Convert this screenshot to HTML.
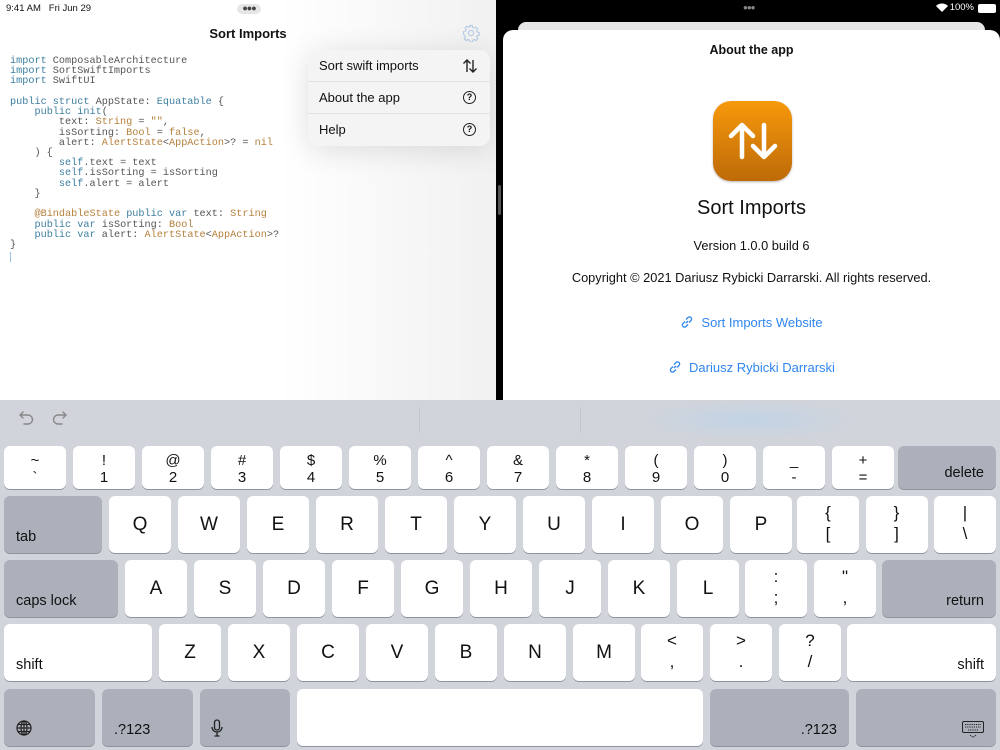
<!DOCTYPE html>
<html><head><meta charset="utf-8"><style>
*{margin:0;padding:0;box-sizing:border-box}
body{width:1000px;height:750px;overflow:hidden;position:relative;font-family:"Liberation Sans",sans-serif;background:#000}
.left{position:absolute;left:0;top:0;width:496px;height:400px;background:linear-gradient(90deg,#fff 0,#fff 280px,#f1f1f1 496px)}
.abs{position:absolute}
.code{position:absolute;left:10px;top:57px;font-family:"Liberation Mono",monospace;font-size:10.2px;line-height:10.22px;color:#555;white-space:pre}
.k{color:#3d7fa1}.t{color:#b5803c}
.menu{position:absolute;left:308px;top:50px;width:182px;height:96px;background:#f4f4f4;border-radius:10px;box-shadow:0 4px 30px rgba(0,0,0,.12);font-size:13px;color:#111}
.menu div{height:32px;line-height:32px;padding-left:11px;border-bottom:1px solid #e2e2e2;position:relative}
.menu div:last-child{border:none}
.q{position:absolute;right:14px;top:9px;width:13px;height:13px;border:1.2px solid #222;border-radius:50%;font-size:9px;line-height:11px;text-align:center;font-weight:bold}
.right{position:absolute;left:503px;top:30px;width:497px;height:370px;background:#fff;border-radius:10px 10px 0 0}
.kb{position:absolute;left:0;top:400px;width:1000px;height:350px;background:#d1d4db}
.key{position:absolute;background:#fff;border-radius:6px;box-shadow:0 1px 0 #8e939c;text-align:center;color:#111}
.sp{background:#abb0ba}
.l{font-size:19px;line-height:57px}
.d{font-size:15px;line-height:17px;padding-top:6px}
.lab{position:absolute;font-size:14.5px;bottom:8px}
.lnk{position:absolute;left:0;width:497px;text-align:center;font-size:13px;color:#2f86f0}
.lnk svg{vertical-align:-2px;margin-right:7px}
</style></head><body>
<div class="left">
<div class="abs" style="left:6px;top:3px;font-size:9.5px;color:#111">9:41 AM&nbsp;&nbsp;&nbsp;Fri Jun 29</div>
<div class="abs" style="left:237px;top:4px;width:24px;height:10px;border-radius:5px;background:#e6e6e6;font-size:9px;line-height:9px;text-align:center;color:#444;letter-spacing:-1px">●●●</div>
<div class="abs" style="left:0;width:496px;top:26px;text-align:center;font-size:13px;font-weight:bold;color:#111">Sort Imports</div>
<svg class="abs" style="left:462px;top:24px" width="18" height="18" viewBox="0 0 24 24" fill="none" stroke="#b9cde6" stroke-width="1.6"><circle cx="12" cy="12" r="3.5"/><path d="M10.3 2h3.4l.6 2.6 2 .9 2.3-1.4 2.4 2.4-1.4 2.3.9 2 2.6.6v3.4l-2.6.6-.9 2 1.4 2.3-2.4 2.4-2.3-1.4-2 .9-.6 2.6h-3.4l-.6-2.6-2-.9-2.3 1.4-2.4-2.4 1.4-2.3-.9-2L2 13.7v-3.4l2.6-.6.9-2-1.4-2.3 2.4-2.4 2.3 1.4 2-.9z"/></svg>
<div class="code"><span class="k">import</span> ComposableArchitecture
<span class="k">import</span> SortSwiftImports
<span class="k">import</span> SwiftUI

<span class="k">public struct</span> AppState: <span class="k">Equatable</span> {
    <span class="k">public init</span>(
        text: <span class="t">String</span> = <span class="t">""</span>,
        isSorting: <span class="t">Bool</span> = <span class="t">false</span>,
        alert: <span class="t">AlertState</span>&lt;<span class="t">AppAction</span>&gt;? = <span class="t">nil</span>
    ) {
        <span class="k">self</span>.text = text
        <span class="k">self</span>.isSorting = isSorting
        <span class="k">self</span>.alert = alert
    }

    <span class="t">@BindableState</span> <span class="k">public var</span> text: <span class="t">String</span>
    <span class="k">public var</span> isSorting: <span class="t">Bool</span>
    <span class="k">public var</span> alert: <span class="t">AlertState</span>&lt;<span class="t">AppAction</span>&gt;?
}</div>
<div class="abs" style="left:10px;top:252px;width:1px;height:10px;background:#9ec3e6"></div>
<div class="menu">
<div>Sort swift imports<svg class="abs" style="right:12px;top:8px" width="16" height="16" viewBox="0 0 16 16" fill="none" stroke="#222" stroke-width="1.4"><path d="M5 14V2M1.5 5.5 5 2l3.5 3.5M11 2v12M7.5 10.5 11 14l3.5-3.5"/></svg></div>
<div>About the app<span class="q">?</span></div>
<div>Help<span class="q">?</span></div>
</div>
</div>
<div class="abs" style="left:498px;top:185px;width:3px;height:30px;background:#555;border-radius:2px"></div>
<div class="abs" style="left:743px;top:3px;color:#888;font-size:8px;letter-spacing:-1px">●●●</div>
<div class="abs" style="right:26px;top:2px;color:#fff;font-size:9.5px">100%</div>
<div class="abs" style="right:4px;top:4px;width:18px;height:9px;border-radius:2px;background:#fff"></div>
<svg class="abs" style="left:936px;top:3px" width="12" height="9" viewBox="0 0 12 9"><path d="M6 9 0 3a8.5 8.5 0 0 1 12 0z" fill="#fff"/></svg>
<div class="abs" style="left:518px;top:22px;width:467px;height:20px;background:#e6e6e6;border-radius:8px"></div>
<div class="right">
<div class="abs" style="left:0;width:497px;top:13px;text-align:center;font-size:12.5px;font-weight:bold;color:#111">About the app</div>
<div class="abs" style="left:210px;top:71px;width:79px;height:80px;border-radius:18px;background:linear-gradient(#f7990b,#bd6a08);box-shadow:0 1px 2px rgba(0,0,0,.3)">
<svg width="79" height="80" viewBox="0 0 79 80" fill="none" stroke="#fff" stroke-width="4.5" stroke-linecap="round" stroke-linejoin="round"><path d="M29 56V24M18 35l11-11 11 11M51 24v32M40 45l11 11 11-11"/></svg></div>
<div class="abs" style="left:0;width:497px;top:167px;text-align:center;font-size:20px;color:#111">Sort Imports</div>
<div class="abs" style="left:0;width:497px;top:208px;text-align:center;font-size:12.8px;color:#111">Version 1.0.0 build 6</div>
<div class="abs" style="left:0;width:497px;top:240px;text-align:center;font-size:12.8px;color:#111">Copyright © 2021 Dariusz Rybicki Darrarski. All rights reserved.</div>
<div class="lnk" style="top:285px"><svg width="14" height="14" viewBox="0 0 14 14" fill="none" stroke="#2f86f0" stroke-width="1.3"><path d="M6 8 8 6M5 6.5 3 8.5a2.1 2.1 0 0 0 3 3L8 9.5M9 7.5l2-2a2.1 2.1 0 0 0-3-3L6 4.5"/></svg>Sort Imports Website</div>
<div class="lnk" style="top:330px"><svg width="14" height="14" viewBox="0 0 14 14" fill="none" stroke="#2f86f0" stroke-width="1.3"><path d="M6 8 8 6M5 6.5 3 8.5a2.1 2.1 0 0 0 3 3L8 9.5M9 7.5l2-2a2.1 2.1 0 0 0-3-3L6 4.5"/></svg>Dariusz Rybicki Darrarski</div>
</div>
<div class="kb">
<svg class="abs" style="left:17px;top:11px" width="56" height="16" viewBox="0 0 56 16" fill="none" stroke="#888" stroke-width="1.4" stroke-linecap="round"><path d="M4 4h7a4.5 4.5 0 0 1 0 9H7M6 1 3 4l3 3M48 4h-7a4.5 4.5 0 0 0 0 9h4M46 1l3 3-3 3"/></svg>
<div class="abs" style="left:419px;top:7px;width:1px;height:26px;background:#c4c7ce"></div>
<div class="abs" style="left:580px;top:7px;width:1px;height:26px;background:#c4c7ce"></div>
<div class="abs" style="left:640px;top:0;width:220px;height:40px;background:radial-gradient(ellipse at center,#c2d3e6,rgba(209,212,219,0) 70%)"></div>
</div>
<div id="keys"></div>
<script>
var h='';function k(x,y,w,hh,html,cls){h+='<div class="key '+(cls||'')+'" style="left:'+x+'px;top:'+y+'px;width:'+w+'px;height:'+hh+'px">'+html+'</div>';}
var r1=[['~','`'],['!','1'],['@','2'],['#','3'],['$','4'],['%','5'],['^','6'],['&amp;','7'],['*','8'],['(','9'],[')','0'],['_','-'],['+','=']];
r1.forEach(function(c,i){k(4+69*i,446,62,43,'<div class="d">'+c[0]+'<br>'+c[1]+'</div>');});
k(898,446,98,43,'<span class="lab" style="right:12px">delete</span>','sp');
k(4,496,98,57,'<span class="lab" style="left:12px">tab</span>','sp');
'QWERTYUIOP'.split('').forEach(function(c,i){k(109+69*i,496,62,57,'<div class="l">'+c+'</div>');});
[['{','['],['}',']'],['|','\\']].forEach(function(c,i){k(797+68.5*(i),496,62,57,'<div class="d" style="font-size:17px;line-height:21px;padding-top:6px">'+c[0]+'<br>'+c[1]+'</div>');});
k(4,560,114,57,'<span class="lab" style="left:12px">caps lock</span>','sp');
'ASDFGHJKL'.split('').forEach(function(c,i){k(125+69*i,560,62,57,'<div class="l">'+c+'</div>');});
[[':',';'],['"',',']].forEach(function(c,i){k(745+69*i,560,62,57,'<div class="d" style="font-size:17px;line-height:21px;padding-top:6px">'+c[0]+'<br>'+c[1]+'</div>');});
k(882,560,114,57,'<span class="lab" style="right:12px">return</span>','sp');
k(4,624,148,57,'<span class="lab" style="left:12px">shift</span>');
'ZXCVBNM'.split('').forEach(function(c,i){k(159+69*i,624,62,57,'<div class="l">'+c+'</div>');});
[['&lt;',','],['&gt;','.'],['?','/']].forEach(function(c,i){k(641+69*i,624,62,57,'<div class="d" style="font-size:17px;line-height:21px;padding-top:6px">'+c[0]+'<br>'+c[1]+'</div>');});
k(847,624,149,57,'<span class="lab" style="right:12px">shift</span>');
k(4,689,91,57,'<svg class="abs" style="left:12px;top:31px" width="16" height="16" viewBox="0 0 16 16" fill="none" stroke="#222" stroke-width="1.2"><circle cx="8" cy="8" r="7"/><ellipse cx="8" cy="8" rx="3" ry="7"/><path d="M1 8h14M2.5 4.5h11M2.5 11.5h11M8 1v14"/></svg>','sp');
k(102,689,91,57,'<span class="lab" style="left:12px">.?123</span>','sp');
k(200,689,90,57,'<svg class="abs" style="left:11px;top:30px" width="12" height="18" viewBox="0 0 12 18" fill="none" stroke="#222" stroke-width="1.3"><rect x="3.5" y="1" width="5" height="10" rx="2.5"/><path d="M1 8a5 5 0 0 0 10 0M6 13v4M3.5 17h5"/></svg>','sp');
k(297,689,406,57,'');
k(710,689,139,57,'<span class="lab" style="right:12px">.?123</span>','sp');
k(856,689,140,57,'<svg class="abs" style="right:12px;top:32px" width="22" height="18" viewBox="0 0 22 18" fill="none" stroke="#222" stroke-width="1"><rect x="0.5" y="0.5" width="21" height="11" rx="1.5"/><path d="M3 3.5h16M3 6h16M6 9h10M8 14l3 2.5 3-2.5" stroke-dasharray="1.2 1"/></svg>','sp');
document.getElementById('keys').innerHTML=h;
</script>
</body></html>
